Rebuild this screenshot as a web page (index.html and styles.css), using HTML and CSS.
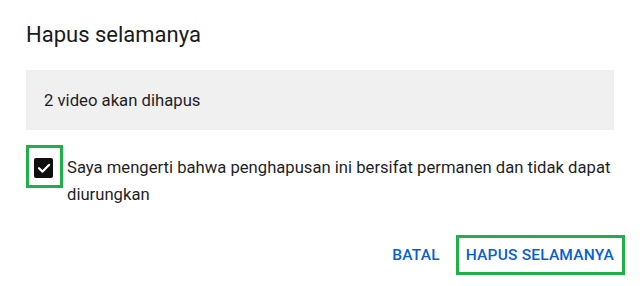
FILE: index.html
```html
<!DOCTYPE html>
<html lang="id">
<head>
<meta charset="utf-8">
<link rel="stylesheet" href="styles.css">
</head>
<body>
<div class="dialog">
  <h1 class="title">Hapus selamanya</h1>
  <div class="info">2 video akan dihapus</div>
  <div class="confirm">
    <div class="check-wrap">
      <span class="checkbox">
        <svg viewBox="0 0 20 20" width="20" height="20"><path d="M5 10.2 L8.6 13.6 L15.2 6.8" fill="none" stroke="#fff" stroke-width="2.2" stroke-linecap="round" stroke-linejoin="round"/></svg>
      </span>
    </div>
    <p class="label">Saya mengerti bahwa penghapusan ini bersifat permanen dan tidak dapat diurungkan</p>
  </div>
  <div class="actions">
    <button class="btn">BATAL</button>
    <button class="btn btn-hl">HAPUS SELAMANYA</button>
  </div>
</div>
</body>
</html>
```
FILE: styles.css
```css
html, body {
  margin: 0;
  padding: 0;
  background: #fff;
}
body {
  font-family: Roboto, "Liberation Sans", sans-serif;
  color: #0f0f0f;
  width: 640px;
  height: 286px;
  overflow: hidden;
}
.dialog {
  padding: 20px 26px 0 26px;
}
.title {
  margin: 0;
  font-size: 22px;
  font-weight: 400;
  line-height: 30px;
  color: #1a1a1a;
}
.info {
  margin-top: 20px;
  height: 60px;
  background: #f0f0f0;
  padding-left: 18px;
  display: flex;
  align-items: center;
  font-size: 16.7px;
  color: #1f1f1f;
}
.confirm {
  display: flex;
  align-items: flex-start;
  margin-top: 15px;
  gap: 4px;
}
.check-wrap {
  border: 3px solid #20b04a;
  padding: 10px 7px 7px 5px;
  flex: none;
}
.checkbox {
  display: block;
  width: 19px;
  height: 20px;
  background: #0f0f0f;
  border-radius: 2px;
}
.checkbox svg {
  display: block;
}
.label {
  margin: 0;
  padding-top: 9px;
  font-size: 16.65px;
  line-height: 27px;
  color: #1f1f1f;
}
.actions {
  display: flex;
  justify-content: flex-end;
  align-items: center;
  margin-top: 27px;
  margin-right: -11px;
  gap: 5px;
}
.btn {
  font-family: Roboto, "Liberation Sans", sans-serif;
  font-size: 15.5px;
  font-weight: 500;
  color: #065fd4;
  background: none;
  border: 3px solid transparent;
  padding: 8px 8px 8px 7px;
  line-height: 18px;
  letter-spacing: 0.2px;
}
.btn-hl {
  border-color: #20b04a;
}
```
